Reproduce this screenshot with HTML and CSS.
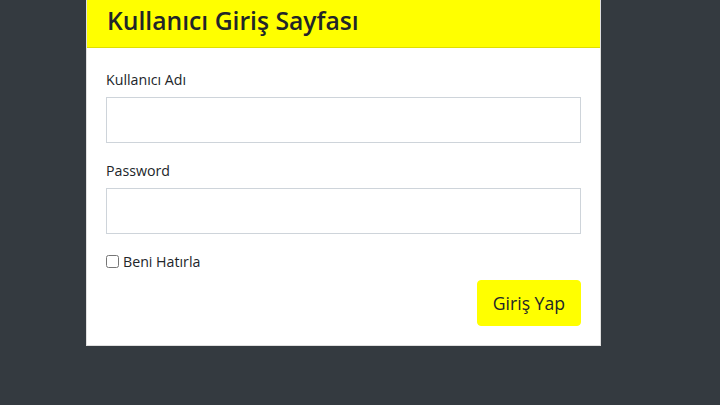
FILE: index.html
```html
<!DOCTYPE html>
<html>
<head>
    <title>Kullanıcı Giriş Sayfası</title>
    <link rel="stylesheet" href="styles.css">
</head>
<body>
    <div class="wrapper">
        <div class="card">
            <div class="card-header">
                <h3>Kullanıcı Giriş Sayfası</h3>
            </div>
            <div class="card-body">
                <div class="form-group">
                    <label for="kullanici">Kullanıcı Adı</label>
                    <input type="text" class="form-control" id="kullanici">
                </div>
                <div class="form-group">
                    <label for="sifre">Password</label>
                    <input type="password" class="form-control" id="sifre">
                </div>
                <div class="check">
                    <input type="checkbox" id="hatirla">
                    <label for="hatirla">Beni Hatırla</label>
                </div>
                <div class="actions">
                    <button class="btn">Giriş Yap</button>
                </div>
            </div>
        </div>
    </div>
</body>
</html>
```

FILE: styles.css
```css
body {
    margin: 0;
    padding: 0;
    background-color: #343a40;
    font-family: "Open Sans", Arial, sans-serif;
    color: #212529;
}

.wrapper {
    padding-left: 86px;
    margin-top: -7px;
}

.card {
    width: 515px;
    background-color: #fff;
    border: 1px solid rgba(0, 0, 0, .125);
    box-sizing: border-box;
}

.card-header {
    background-color: #ffff00;
    padding: 12px 20px;
    border-bottom: 1px solid rgba(0, 0, 0, .125);
}

.card-header h3 {
    margin: 0;
    font-size: 24.7px;
    font-weight: 600;
    line-height: 29px;
}

.card-body {
    padding: 20px 19px 19px 19px;
}

.form-group {
    margin-bottom: 16px;
}

.form-group label {
    display: block;
    font-size: 14.2px;
    line-height: 24px;
    margin-bottom: 5px;
}

.form-control {
    display: block;
    width: 100%;
    height: 46px;
    box-sizing: border-box;
    border: 1px solid #ced4da;
    border-radius: 0;
    padding: 6px 12px;
    font-size: 16px;
    background-color: #fff;
}

.check {
    display: flex;
    align-items: center;
    height: 24px;
    margin-top: -1px;
    font-size: 14.2px;
}

.check input {
    margin: 0 4px 0 0;
    width: 13px;
    height: 13px;
}

.actions {
    display: flex;
    justify-content: flex-end;
    margin-top: 7px;
}

.btn {
    background-color: #ffff00;
    color: #212529;
    border: 1px solid #ffff00;
    border-radius: 4px;
    height: 46px;
    padding: 0 15px;
    font-family: "Open Sans", Arial, sans-serif;
    font-size: 17.6px;
    cursor: pointer;
}
```
